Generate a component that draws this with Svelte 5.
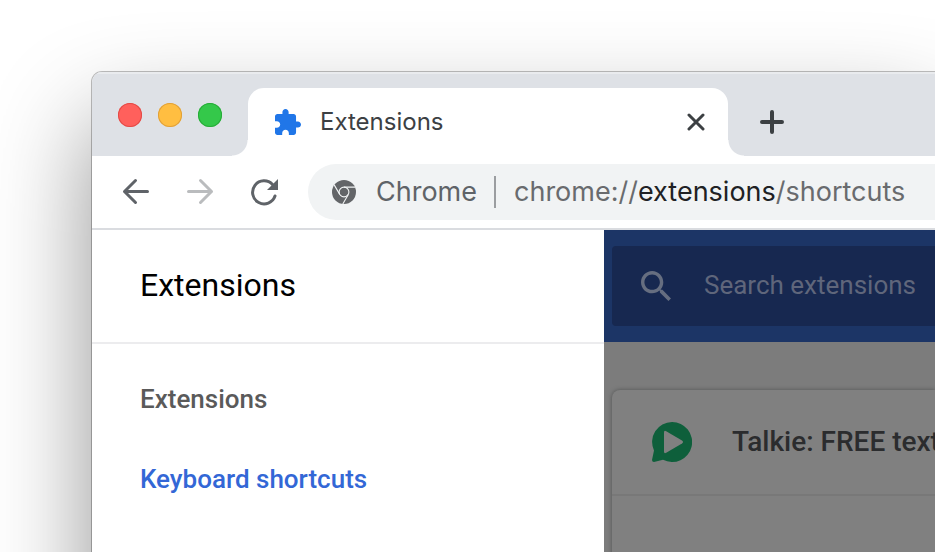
<script>
  let query = $state('');
  let address = 'chrome://extensions/shortcuts';
  const lights = [
    { name: 'Close window', tone: 'red' },
    { name: 'Minimise window', tone: 'amber' },
    { name: 'Zoom window', tone: 'green' }
  ];
  const links = [
    { label: 'Extensions', active: false },
    { label: 'Keyboard shortcuts', active: true }
  ];
  const [scheme, host, path] = [address.slice(0, 9), address.slice(9, 19), address.slice(19)];
</script>

<div class="desktop">
  <div class="window">
    <header class="strip">
      <div class="lights">
        {#each lights as light}
          <button class="light {light.tone}" aria-label={light.name}></button>
        {/each}
      </div>
      <div class="tab">
        <svg class="puzzle" viewBox="2 1 21 21" width="26" height="26" aria-hidden="true">
          <path fill="#2076e8" d="M20.500 11H19V7c0-1.100-.9-2-2-2h-4V3.500C13 2.120 11.880 1 10.500 1S8 2.120 8 3.500V5H4c-1.100 0-1.990.9-1.990 2v3.800H3.500c1.490 0 2.700 1.210 2.700 2.700s-1.210 2.700-2.700 2.700H2V20c0 1.100.9 2 2 2h3.800v-1.500c0-1.490 1.210-2.700 2.700-2.700 1.490 0 2.700 1.210 2.700 2.700V22H17c1.100 0 2-.9 2-2v-4h1.500c1.380 0 2.500-1.120 2.500-2.500S21.880 11 20.500 11z" />
        </svg>
        <span class="tab-title">Extensions</span>
        <button class="icon" aria-label="Close tab">
          <svg viewBox="0 0 18 18" width="18" height="18"><path d="M2 2 16 16M16 2 2 16" stroke="#3c4043" stroke-width="3" stroke-linecap="round" /></svg>
        </button>
      </div>
      <button class="icon new-tab" aria-label="New tab">
        <svg viewBox="0 0 24 24" width="24" height="24"><path d="M12 2V22M2 12H22" stroke="#3c4043" stroke-width="4" stroke-linecap="round" /></svg>
      </button>
    </header>

    <div class="toolbar">
      <button class="icon" aria-label="Back">
        <svg viewBox="0 0 28 28" width="28" height="28" fill="none" stroke="#5f6368" stroke-width="3" stroke-linecap="round" stroke-linejoin="round"><path d="M25.500 13.500H2.500M13.500 2.500 2.500 13.500 13.500 24.500" /></svg>
      </button>
      <button class="icon" aria-label="Forward" disabled>
        <svg viewBox="0 0 28 28" width="28" height="28" fill="none" stroke="#babcbe" stroke-width="3" stroke-linecap="round" stroke-linejoin="round"><path d="M2.500 13.500H25.500M14.500 2.500 25.500 13.500 14.500 24.500" /></svg>
      </button>
      <button class="icon" aria-label="Reload">
        <svg viewBox="0 0 28 28" width="28" height="28"><path d="M22.500 6.500A11.500 11.500 0 1 0 25 18" fill="none" stroke="#5f6368" stroke-width="3" stroke-linecap="round" /><path d="M28 1V12H17Z" fill="#5f6368" /></svg>
      </button>
      <div class="omnibox">
        <svg viewBox="0 0 24 24" width="24" height="24" aria-hidden="true">
          <circle cx="12" cy="12" r="12" fill="#636568" />
          <g fill="none" stroke="#f1f3f4" stroke-width="1.100"><circle cx="12" cy="12" r="4.900" /><path d="M12 7.100H23M7.700 14.400 2.200 4.900M16.300 14.400 10.800 24" /></g>
        </svg>
        <span class="origin">Chrome</span>
        <a class="url" href={address}>{scheme}<b>{host}</b>{path}</a>
      </div>
    </div>

    <div class="body">
      <aside>
        <h1>Extensions</h1>
        <nav>
          {#each links as link}
            <a href="#{link.label}" class:active={link.active}>{link.label}</a>
          {/each}
        </nav>
      </aside>
      <main>
        <div class="bar">
          <label class="search">
            <svg viewBox="3 3 17.500 17.500" width="30" height="30" aria-hidden="true"><path fill="#666e80" d="M15.500 14h-.79l-.28-.27C15.410 12.590 16 11.110 16 9.500 16 5.910 13.090 3 9.500 3S3 5.910 3 9.500 5.910 16 9.500 16c1.610 0 3.090-.59 4.230-1.570l.27.280v.79l5 4.990L20.490 19l-4.990-5zm-6 0C7.010 14 5 11.990 5 9.500S7.010 5 9.500 5 14 7.010 14 9.500 11.990 14 9.500 14z" /></svg>
            <input type="text" aria-label="Search extensions" placeholder="Search extensions" bind:value={query} />
          </label>
        </div>
        <article>
          <div class="card-head">
            <svg viewBox="0 0 40 40" width="40" height="40" aria-hidden="true"><path fill="#0e5f3b" d="M20 0a20 20 0 1 1-9 37.800L2 40Q0 40 0 38L2 28.500A20 20 0 0 1 20 0Z" /><path fill="#808080" d="M12 10.500Q12 8 14.200 9.200L30 18.500Q32 20 30 21.500L14.200 30.800Q12 32 12 29.500Z" /></svg>
            <h2>Talkie: FREE text</h2>
          </div>
        </article>
      </main>
    </div>
  </div>
</div>

<style>
  :global(body) { margin: 0; background: #fff; }
  .desktop { box-sizing: border-box; height: 100vh; overflow: hidden; display: flex; padding: 72px 0 0 92px; }
  .window {
    flex: 1 0 100%;
    height: 120vh;
    display: flex;
    flex-direction: column;
    overflow: hidden;
    border-radius: 10px 0 0 0;
    background: #fff;
    font-family: Inter, "Liberation Sans", sans-serif;
    box-shadow: 0 0 0 1px rgba(0, 0, 0, 0.25), 0 50px 100px rgba(0, 0, 0, 0.43);
  }
  button { border: 0; padding: 0; margin: 0; background: none; }
  svg { display: block; flex: none; }
  .icon { display: grid; place-items: center; }

  .strip { flex: none; display: flex; height: 84px; background: #dee1e6; box-shadow: inset 0 2px #e9ebee; }
  .lights { display: flex; gap: 16px; padding: 31px 26px 0; }
  .light { width: 24px; height: 24px; border-radius: 50%; }
  .red { background: #ff605c; box-shadow: inset 0 0 0 1px #e24b47; }
  .amber { background: #ffbe41; box-shadow: inset 0 0 0 1px #e0a03a; }
  .green { background: #34c84a; box-shadow: inset 0 0 0 1px #28ab38; }
  .tab {
    position: relative;
    box-sizing: border-box;
    width: 480px;
    margin-top: 16px;
    padding: 0 23px 0 27px;
    display: flex;
    align-items: center;
    border-radius: 16px 16px 0 0;
    background: #fff;
  }
  .tab::before, .tab::after { content: ""; position: absolute; bottom: 0; width: 16px; height: 16px; }
  .tab::before { right: 100%; background: radial-gradient(circle at 0 0, transparent 15px, #fff 16px); }
  .tab::after { left: 100%; background: radial-gradient(circle at 100% 0, transparent 15px, #fff 16px); }
  .tab-title { flex: 1; padding-left: 19px; font-size: 24px; line-height: 32px; color: #3c4043; }
  .new-tab { margin: 16px 0 0 32px; }

  .toolbar { flex: none; display: flex; align-items: center; gap: 36px; height: 72px; padding-left: 30px; border-bottom: 2px solid #dadce0; }
  .omnibox { flex: 1; display: flex; align-items: center; height: 56px; margin-left: -6px; padding-left: 24px; border-radius: 28px 0 0 28px; background: #f1f3f4; font-size: 27px; line-height: 32px; color: #696b6e; white-space: nowrap; }
  .origin { margin-left: 20px; padding-right: 17px; border-right: 2px solid #9b9da0; color: #5f6368; }
  .url { padding-left: 18px; color: inherit; text-decoration: none; }
  .url b { font-weight: 400; color: #202124; }

  .body { flex: 1; display: flex; font-family: Roboto, "Liberation Sans", sans-serif; }
  aside { flex: none; width: 512px; background: #fff; }
  h1 { margin: 0; padding: 0 48px 2px; border-bottom: 2px solid #ececee; font-size: 32px; line-height: 110px; font-weight: 400; color: #000; }
  nav { display: flex; flex-direction: column; padding: 15px 48px; }
  nav a { font-size: 26px; line-height: 80px; font-weight: 500; color: #5a5a5a; text-decoration: none; }
  nav .active { color: #3367d6; }
  main { flex: 1; min-width: 0; background: #7c7c7c; }
  .bar { padding: 16px 0 16px 8px; background: #1c3566; }
  .search { display: flex; align-items: center; height: 80px; padding-left: 29px; border-radius: 4px 0 0 4px; background: #172850; }
  .search input { flex: 1; min-width: 0; margin: 0; padding: 0 0 2px 33px; border: 0; outline: 0; background: none; font: 26px/32px Roboto, "Liberation Sans", sans-serif; color: #b0b5c0; }
  .search input::placeholder { color: #5f667b; opacity: 1; }
  article { height: 600px; margin: 48px 0 0 8px; border-radius: 8px 0 0 0; background: #808080; box-shadow: 0 0 4px rgba(40, 44, 44, 0.5); }
  .card-head { display: flex; align-items: center; gap: 40px; height: 104px; padding-left: 40px; border-bottom: 2px solid #787878; white-space: nowrap; }
  h2 { margin: 0; font-size: 28px; line-height: 40px; font-weight: 500; color: #2b2c2e; }
</style>
